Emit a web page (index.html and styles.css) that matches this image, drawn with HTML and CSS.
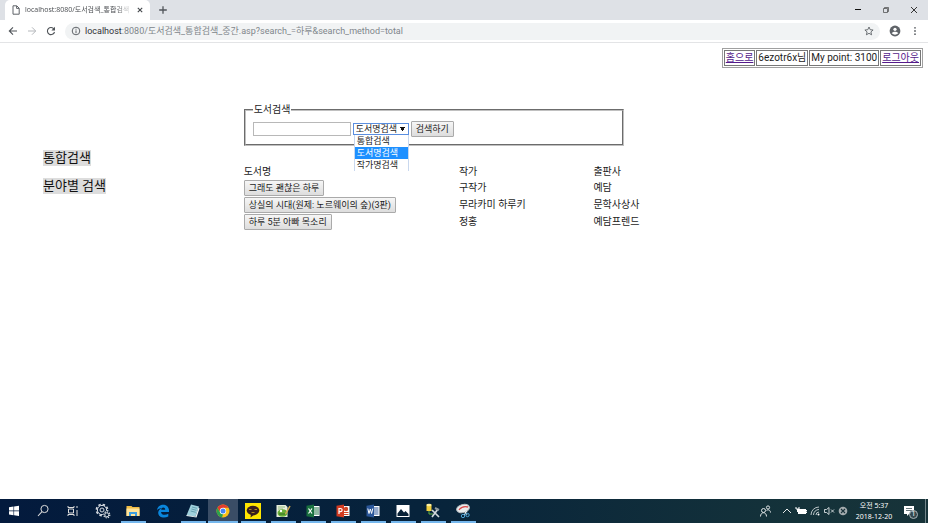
FILE: index.html
```html
<!DOCTYPE html>
<html lang="ko">
<head>
<meta charset="utf-8">
<title>도서검색_통합검색</title>
<link rel="stylesheet" href="styles.css">
</head>
<body>
<header class="browser">
  <div class="tabs">
    <div class="tab">
      <svg class="ic10" viewBox="0 0 10 10"><path d="M2 .8h3.8L8.2 3.2v6H2zM5.6 1v2.4H8" fill="none" stroke="#5f6368"/></svg>
      <span class="tab-title">localhost:8080/도서검색_통합검색</span>
      <button class="icon" aria-label="탭 닫기"><svg class="ic8" viewBox="0 0 8 8"><path d="M1.8 1.8l4.4 4.4M6.2 1.8L1.8 6.2" stroke="#45494d" stroke-width="1.1"/></svg></button>
    </div>
    <button class="icon new-tab" aria-label="새 탭"><svg class="ic10" viewBox="0 0 10 10"><path d="M5 1.2v7.6M1.2 5h7.6" stroke="#50545a" stroke-width="1.3"/></svg></button>
    <div class="window-buttons">
      <button class="icon" aria-label="최소화"><svg class="ic8" viewBox="0 0 8 8"><path d="M1 3.5h6" stroke="#111"/></svg></button>
      <button class="icon" aria-label="이전 크기로"><svg class="ic8" viewBox="0 0 8 8"><path d="M1.500 2.500h4v4h-4zM2.500 2.500v-1h4v4h-1" fill="none" stroke="#444" stroke-width=".7"/></svg></button>
      <button class="icon" aria-label="닫기"><svg class="ic8" viewBox="0 0 8 8"><path d="M1 1l6 6M7 1L1 7" stroke="#222" stroke-width=".9"/></svg></button>
    </div>
  </div>
  <div class="toolbar">
    <button class="icon" aria-label="뒤로"><svg class="ic10" viewBox="0 0 10 10"><path d="M9 5H1.5M5 1.3L1.3 5 5 8.7" fill="none" stroke="#505459" stroke-width="1.1"/></svg></button>
    <button class="icon" aria-label="앞으로"><svg class="ic10" viewBox="0 0 10 10"><path d="M1 5h7.5M5 1.3L8.7 5 5 8.7" fill="none" stroke="#b4b7bb"/></svg></button>
    <button class="icon" aria-label="새로고침"><svg class="ic10" viewBox="0 0 10 10"><path d="M8 3A3.6 3.6 0 1 0 8.5 6" fill="none" stroke="#505459" stroke-width="1.1"/><path d="M9 .8v3.6H5.4z" fill="#505459"/></svg></button>
    <div class="address">
      <svg class="ic10" viewBox="0 0 10 10"><circle cx="5" cy="5" r="3.8" fill="none" stroke="#5f6368"/><path d="M5 4.4v2.8M5 2.7v1" stroke="#5f6368"/></svg>
      <span class="url"><b>localhost</b>:8080/도서검색_통합검색_중간.asp?search_=하루&amp;search_method=total</span>
      <button class="icon" aria-label="북마크"><svg class="ic10" viewBox="0 0 10 10"><path d="M5 1l1.2 2.7 2.9.3-2.2 1.9.7 2.9L5 7.300 2.400 8.800l.7-2.900L.9 4l2.900-.3z" fill="none" stroke="#5f6368" stroke-width=".9"/></svg></button>
    </div>
    <button class="icon" aria-label="프로필"><svg class="ic12" viewBox="0 0 12 12"><circle cx="6" cy="6" r="5.400" fill="#5f6368"/><circle cx="6" cy="4.300" r="1.600" fill="#fff"/><path d="M2.700 8.300c.6-2.200 6-2.200 6.600 0Q6 11 2.700 8.300z" fill="#fff"/></svg></button>
    <button class="icon" aria-label="메뉴"><svg class="ic10" viewBox="0 0 10 10"><g fill="#5f6368"><circle cx="5" cy="1.800" r=".9"/><circle cx="5" cy="5" r=".9"/><circle cx="5" cy="8.200" r=".9"/></g></svg></button>
  </div>
</header>

<main class="page">
  <table class="account">
    <tr><td><a href="#home">홈으로</a></td><td>6ezotr6x님</td><td>My point: 3100</td><td><a href="#logout">로그아웃</a></td></tr>
  </table>
  <div class="columns">
    <nav class="side">
      <a href="#total">통합검색</a>
      <a href="#category">분야별 검색</a>
    </nav>
    <section class="content">
      <form>
        <fieldset>
          <legend>도서검색</legend>
          <div class="fields">
            <input type="text" aria-label="검색어">
            <div class="picker">
              <select aria-label="검색 방법">
                <option>통합검색</option>
                <option selected>도서명검색</option>
                <option>작가명검색</option>
              </select>
              <ul class="options">
                <li>통합검색</li>
                <li class="chosen">도서명검색</li>
                <li>작가명검색</li>
              </ul>
            </div>
            <button type="button" class="push">검색하기</button>
          </div>
        </fieldset>
      </form>
      <table class="books">
        <thead><tr><th class="name">도서명</th><th class="author">작가</th><th>출판사</th></tr></thead>
        <tbody>
          <tr><td><button class="push">그래도 괜찮은 하루</button></td><td>구작가</td><td>예담</td></tr>
          <tr><td><button class="push">상실의 시대(원제: 노르웨이의 숲)(3판)</button></td><td>무라카미 하루키</td><td>문학사상사</td></tr>
          <tr><td><button class="push">하루 5분 아빠 목소리</button></td><td>정홍</td><td>예담프렌드</td></tr>
        </tbody>
      </table>
    </section>
  </div>
</main>

<footer class="taskbar">
  <div class="apps">
    <button class="app" aria-label="시작"><svg viewBox="0 0 16 16"><path d="M3 4.300l4.500-.7v4H3zM8.100 3.500L13 2.800v4.800H8.100zM3 8.200h4.500v4L3 11.600zM8.100 8.200H13V13l-4.900-.7z" fill="#fff"/></svg></button>
    <button class="app" aria-label="검색"><svg viewBox="0 0 16 16"><circle cx="9.500" cy="6" r="3.600" fill="none" stroke="#ddd"/><path d="M7 8.700L3 13" stroke="#ddd" stroke-width="1.100"/></svg></button>
    <button class="app" aria-label="작업 보기"><svg viewBox="0 0 16 16"><path d="M3 3v1.500h6V3M3 13v-1.500h6V13M3.500 6h5v4h-5zM12 3v2M12 7v6" fill="none" stroke="#ddd"/></svg></button>
    <button class="app" aria-label="설정"><svg viewBox="0 0 16 16"><g fill="none" stroke="#d8dde4"><circle cx="7" cy="7" r="5.600" stroke-width="1.600" stroke-dasharray="2.400 2"/><circle cx="7" cy="7" r="4.600"/><circle cx="7" cy="7" r="2"/></g><circle cx="11.800" cy="11.800" r="4" fill="#051d3b"/><circle cx="11.800" cy="11.800" r="3" fill="none" stroke="#d8dde4" stroke-width="1.300" stroke-dasharray="1.300 1"/><circle cx="11.800" cy="11.800" r="2" fill="none" stroke="#d8dde4"/></svg></button>
    <button class="app running" aria-label="탐색기"><svg viewBox="0 0 16 16"><path d="M1.500 3h5l1 1h7v9h-13z" fill="#f0bc45"/><path d="M1.500 5.500h13V13h-13z" fill="#ffe49a"/><path d="M4 13V9h8v4h-2v-2H6v2z" fill="#3b9de0"/></svg></button>
    <button class="app" aria-label="Edge"><svg viewBox="0 0 16 16"><path d="M2 7.500C2.500 0 13.500-.5 14 7.300V9H6c.3 3.300 4.500 3.500 7.300 1.800v2.800C8.500 16 3 14 3.200 9.500c.1-2 1.500-3.600 3.500-4.300C4.500 5.200 2.700 6 2 7.500zM6.200 6.700h4c0-3-3.700-3-4 0z" fill="#0a86dc"/></svg></button>
    <button class="app running" aria-label="메모장"><svg viewBox="0 0 16 16"><path d="M6 1.500l8 2-3.500 10-9-1z" fill="#9fd0dc"/><path d="M7 4l5 1.300M6.400 6l5 1.300M5.700 8l5 1.300" stroke="#4c8b9c" stroke-width=".7"/><path d="M1.500 12l9 1.500 3-9 1 1-3 9-10-1.500z" fill="#edf4f5"/></svg></button>
    <button class="app running active" aria-label="Chrome"><svg viewBox="0 0 16 16"><circle cx="8" cy="8" r="6.500" fill="#fbc116"/><path d="M2.400 4.800A6.500 6.500 0 0 1 13.600 4.800H8L5.200 9.600z" fill="#e33b2e"/><path d="M2.400 4.800L5.200 9.600 8 11.200l-1 3.200A6.500 6.500 0 0 1 2.400 4.800z" fill="#2ba24c"/><circle cx="8" cy="8" r="3.200" fill="#fff"/><circle cx="8" cy="8" r="2.500" fill="#4385f5"/></svg></button>
    <button class="app running" aria-label="카카오톡"><svg viewBox="0 0 16 16"><path d="M0 0h16v16H0z" fill="#fee500"/><ellipse cx="8" cy="7.500" rx="6.300" ry="4.700" fill="#381e1e"/><path d="M6 11l-.5 3.500 4-3z" fill="#381e1e"/><path d="M4 6.500h2.500M9.500 6.500H12M6.500 9.500h3" stroke="#c9a520" stroke-width=".8"/></svg></button>
    <button class="app running" aria-label="편집기"><svg viewBox="0 0 16 16"><path d="M1.500 2h9l2 2v10h-11z" fill="#e8efdd"/><path d="M3 4h7M3 6h5" stroke="#92b97f"/><ellipse cx="7.500" cy="10" rx="5" ry="3.800" fill="#67ad38"/><circle cx="6" cy="8" r="1.200" fill="#fff"/><path d="M4 11h6" stroke="#306a23"/><path d="M15 3l-4.500 8" stroke="#d3aa50" stroke-width="1.500"/></svg></button>
    <button class="app running" aria-label="Excel"><svg viewBox="0 0 16 16"><path d="M8 3h6.500v10H8z" fill="#fff"/><path d="M9 5h5M9 7h5M9 9h5M9 11h5" stroke="#217346"/><path d="M1.500 2.700L9 1.500v13l-7.500-1.200z" fill="#19703f"/><path d="M3.500 5.500l3.500 5M7 5.500l-3.500 5" stroke="#fff" stroke-width="1.200"/></svg></button>
    <button class="app running" aria-label="PowerPoint"><svg viewBox="0 0 16 16"><path d="M8 3h6.500v10H8z" fill="#fff"/><path d="M9 9.500h4.500M9 11.500h4.500" stroke="#d24726"/><circle cx="11" cy="6" r="2.200" fill="#d24726"/><path d="M1.500 2.700L9 1.500v13l-7.500-1.200z" fill="#d13a20"/><path d="M4 11V5.500h1.500a1.600 1.600 0 0 1 0 3.200H4" fill="none" stroke="#fff" stroke-width="1.200"/></svg></button>
    <button class="app running" aria-label="Word"><svg viewBox="0 0 16 16"><path d="M8 3h6.500v10H8z" fill="#fff"/><path d="M9 5h4.500M9 7h4.500M9 9h4.500M9 11h4.500" stroke="#2b579a"/><path d="M1.500 2.700L9 1.500v13l-7.500-1.200z" fill="#2a5699"/><path d="M2.800 5.500l1.200 5 1.300-4.500 1.300 4.500 1.200-5" fill="none" stroke="#fff"/></svg></button>
    <button class="app running" aria-label="사진"><svg viewBox="0 0 16 16"><path d="M1.500 2h13v12h-13z" fill="#fff"/><path d="M2.500 13v-2.500L6 6l3 3.500L10.500 8l3 3v2z" fill="#092238"/></svg></button>
    <button class="app running" aria-label="데이터 도구"><svg viewBox="0 0 16 16"><path d="M1.500 1.500h5V8h-5z" fill="#f2cf3f"/><ellipse cx="4" cy="2" rx="2.500" ry="1.200" fill="#fff1a2"/><path d="M4 8v3h4" fill="none" stroke="#5eb145"/><path d="M7 7l7 7M13 6l-6 8" stroke="#d2d7da" stroke-width="1.700"/><path d="M10 5l4 2" stroke="#8e999e" stroke-width="2"/></svg></button>
    <button class="app running" aria-label="캡처 도구"><svg viewBox="0 0 16 16"><ellipse cx="8" cy="5.500" rx="6.500" ry="4" fill="#e9eced" stroke="#b8bdc0" transform="rotate(-15 8 5.500)"/><path d="M4 7c2-3 5-4 9-3" fill="none" stroke="#d94848" stroke-width="1.300"/><path d="M9 7l3 5M12 8l-3 4" stroke="#e8eef2"/><circle cx="8" cy="13" r="1.700" fill="none" stroke="#4fa3d4"/><circle cx="12.500" cy="12" r="1.700" fill="none" stroke="#4fa3d4"/></svg></button>
  </div>
  <div class="tray">
    <svg class="people" viewBox="0 0 12 12"><g fill="none" stroke="#dfe4e6"><circle cx="4.500" cy="5.500" r="2"/><path d="M1.500 11.500c0-5 6-5 6 0"/><circle cx="9" cy="2.500" r="1.600"/><path d="M7.500 5.500c2-1.500 4 0 4 2"/></g></svg>
    <svg viewBox="0 0 12 12"><path d="M2 8l4-4 4 4" fill="none" stroke="#e6e9ea"/></svg>
    <svg viewBox="0 0 12 12"><path d="M3 4h8v5H3z" fill="#fff"/><path d="M11 5.500h1v2h-1M1 2v2h3V2M2.500 4v3" fill="none" stroke="#fff"/></svg>
    <svg viewBox="0 0 12 12"><g fill="none" stroke="#bac4c7"><path d="M2 10a8 8 0 0 1 8-8M4.500 10A5.500 5.500 0 0 1 10 4.500M7 10a3 3 0 0 1 3-3"/></g><circle cx="9.500" cy="9.500" r="1" fill="#fff"/></svg>
    <svg viewBox="0 0 12 12"><path d="M1.500 4.500h2L6 2.500v7l-2.500-2h-2zM8 4.500l3 3M11 4.500l-3 3" fill="none" stroke="#dce2e4" stroke-width=".9"/></svg>
    <svg viewBox="0 0 12 12"><circle cx="6" cy="6" r="4.300" fill="#a3abae"/><path d="M4 4l4 4M8 4L4 8" stroke="#193139" stroke-width="1.100"/></svg>
    <div class="clock"><span>오전 5:37</span><span>2018-12-20</span></div>
    <div class="notice"><svg viewBox="0 0 12 12"><path d="M1 1h10v8H6l-2 2V9H1z" fill="#fff"/><path d="M3 3.500h6M3 5.500h6" stroke="#40545b" stroke-width=".8"/></svg><span class="count">1</span></div>
    <span class="desktop-edge"></span>
  </div>
</footer>
</body>
</html>
```
FILE: styles.css
```css
* { box-sizing: border-box; }
body {
  margin: 0;
  min-height: 100vh;
  display: flex;
  flex-direction: column;
  background: #fff;
  color: #1c1c1c;
  font: 10px/14px Roboto, "Noto Sans CJK KR", sans-serif;
}
svg { display: block; flex: none; }
button { font: inherit; }
.icon { display: flex; padding: 0; border: 0; background: none; }
.ic8 { width: 8px; height: 8px; }
.ic10 { width: 10px; height: 10px; }
.ic12 { width: 12px; height: 12px; }

.tabs { display: flex; align-items: center; height: 20px; padding-left: 5px; background: #dee1e6; }
.tab {
  display: flex;
  align-items: center;
  gap: 4px;
  width: 145px;
  height: 20px;
  padding: 0 6px;
  border-radius: 5px 5px 0 0;
  background: #fff;
}
.tab-title {
  flex: 1;
  overflow: hidden;
  white-space: nowrap;
  font: 7px/12px "Open Sans", "Noto Sans CJK KR", sans-serif;
  color: #4a4d51;
  mask-image: linear-gradient(to right, #000 85%, transparent);
}
.new-tab { margin-left: 8px; }
.window-buttons { display: flex; gap: 20px; margin-left: auto; padding-right: 10px; }

.toolbar {
  display: flex;
  align-items: center;
  gap: 9px;
  height: 23px;
  padding: 0 8px;
  border-bottom: 1px solid #e3e4e6;
}
.address {
  display: flex;
  flex: 1;
  align-items: center;
  gap: 4px;
  height: 17px;
  padding: 0 6px;
  border-radius: 9px;
  background: #f1f3f4;
}
.url {
  flex: 1;
  overflow: hidden;
  white-space: nowrap;
  font: 9px/15px Roboto, "Noto Sans CJK KR", sans-serif;
  color: #80868b;
}
.url b { font-weight: 400; color: #303236; }

.page { flex: 1; padding: 5px; }
.account {
  margin-left: auto;
  border: 1px solid #a0a0a0;
  border-spacing: 1px;
  line-height: 14px;
}
.account td { padding: 0 1px; border: 1px solid #777; white-space: nowrap; }
.account a { color: #551a8b; }
.columns { display: flex; align-items: flex-start; padding-top: 36px; }
.side {
  display: flex;
  flex-direction: column;
  align-items: flex-start;
  gap: 12px;
  width: 26%;
  padding: 46px 0 0 38px;
  font-size: 13px;
  line-height: 16px;
}
.side a { background: #ddd; color: #111; text-decoration: none; }
.content { flex: 1; }

fieldset {
  width: 56%;
  margin: 0;
  padding: 5px 7px 7px;
  border: 2px groove #c0c0c0;
}
legend { padding: 0 1px; line-height: 12px; }
.fields { display: flex; align-items: center; gap: 2px; height: 16px; font-size: 9px; }
.fields input { width: 98px; height: 14px; padding: 0 2px; border: 1px solid #b8b8b8; font: inherit; }
.picker { position: relative; width: 56px; }
select {
  display: block;
  width: 100%;
  height: 12px;
  padding: 0 2px;
  border: 1px solid #5b8fe0;
  border-radius: 0;
  appearance: none;
  background: linear-gradient(#111, #111) no-repeat right 3px top 3px / 5px 1px, linear-gradient(#111, #111) no-repeat right 4px top 4px / 3px 2px, linear-gradient(#111, #111) no-repeat right 5px top 6px / 1px 1px, #fff;
  color: #1c1c1c;
  font: inherit;
  line-height: 10px;
}
.options {
  position: absolute;
  top: 12px;
  left: 1px;
  right: 0;
  margin: 0;
  padding: 0;
  border: solid #c9d8ee;
  border-width: 0 1px;
  background: #fff;
  list-style: none;
  line-height: 12px;
  white-space: nowrap;
}
.options li { padding-left: 2px; }
.options .chosen { background: #1e90ff; color: #fff; }
.push {
  display: block;
  height: 16px;
  padding: 0 4px;
  border: 1px solid #aaa;
  border-radius: 1px;
  background: linear-gradient(#f6f6f6, #ddd);
  color: #1c1c1c;
  font-size: 9px;
  line-height: 14px;
  white-space: nowrap;
}

.books { width: 66%; margin-top: 18px; border-spacing: 0 1px; table-layout: fixed; }
.books th, .books td { padding: 0; font-weight: 400; text-align: left; white-space: nowrap; }
.books .name { width: 48%; }
.books .author { width: 30%; }

.taskbar {
  display: flex;
  justify-content: space-between;
  height: 24px;
  background: linear-gradient(to right, #031a3d, #07233b 45%, #14323a 85%, #173339);
}
.apps { display: flex; }
.app {
  display: flex;
  align-items: center;
  justify-content: center;
  width: 30px;
  padding: 0;
  border: 0;
  background: none;
}
.app:first-child { width: 28px; }
.app svg { width: 16px; height: 16px; }
.running { background: linear-gradient(#75b7ed, #75b7ed) no-repeat center bottom / 25px 2px; }
.active { background: linear-gradient(#75b7ed, #75b7ed) no-repeat center bottom / 30px 2px, #3a4d66; }
.tray { display: flex; align-items: center; gap: 2px; color: #fff; }
.tray svg { width: 12px; height: 12px; }
.tray .people { margin-right: 8px; }
.clock {
  display: flex;
  flex-direction: column;
  width: 46px;
  text-align: center;
  font: 7px/11px "Noto Sans", "Noto Sans CJK KR", sans-serif;
}
.notice { position: relative; margin-left: 4px; }
.count {
  position: absolute;
  left: 6px;
  top: 5px;
  width: 9px;
  height: 9px;
  border: 1px solid #aab4b7;
  border-radius: 50%;
  background: #34494f;
  font-size: 7px;
  line-height: 7px;
  text-align: center;
}
.desktop-edge { width: 3px; height: 24px; margin-left: 8px; border-left: 1px solid #72858a; }
```
